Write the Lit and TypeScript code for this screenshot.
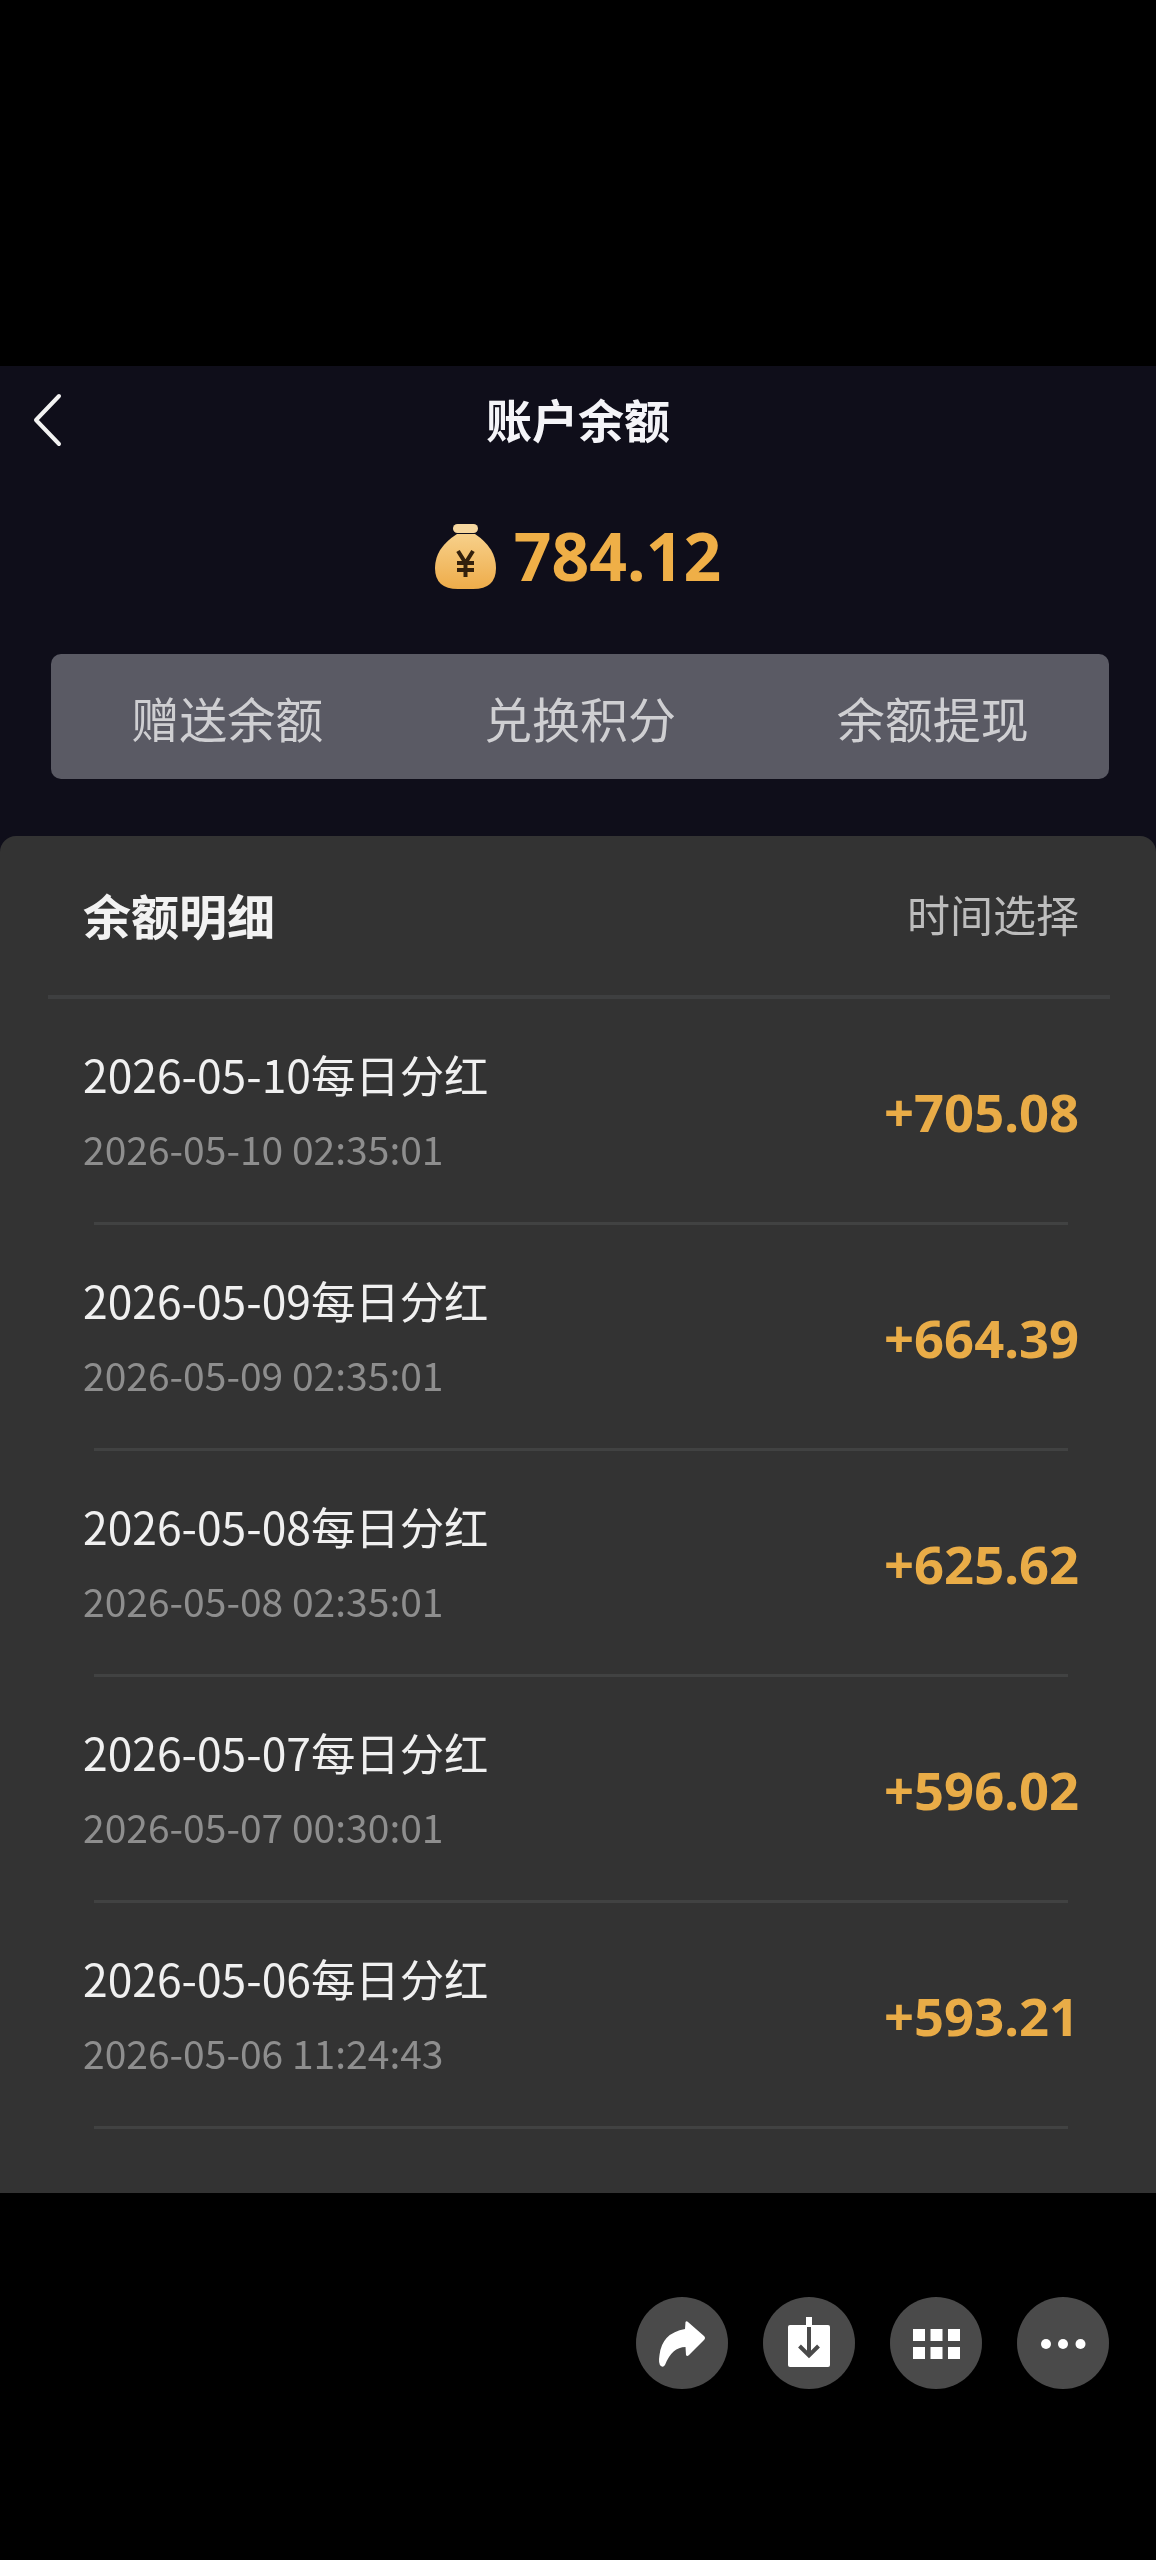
import {LitElement, html, css} from 'lit';
import {customElement} from 'lit/decorators.js';

const rows = [
  {title: '2026-05-10每日分红', time: '2026-05-10 02:35:01', amount: '+705.08'},
  {title: '2026-05-09每日分红', time: '2026-05-09 02:35:01', amount: '+664.39'},
  {title: '2026-05-08每日分红', time: '2026-05-08 02:35:01', amount: '+625.62'},
  {title: '2026-05-07每日分红', time: '2026-05-07 00:30:01', amount: '+596.02'},
  {title: '2026-05-06每日分红', time: '2026-05-06 11:24:43', amount: '+593.21'},
];

const tabs = ['赠送余额', '兑换积分', '余额提现'];

@customElement('app-root')
export class AppRoot extends LitElement {
  static override styles = css`
    * {
      box-sizing: border-box;
      margin: 0;
      padding: 0;
    }

    :host {
      display: block;
      width: 1156px;
      height: 2560px;
      background: #000;
      font-family: "Noto Sans CJK SC", "Noto Sans", sans-serif;
      overflow: hidden;
    }

    .screen {
      margin-top: 366px;
      height: 1827px;
      background: #0f0e1a;
      display: flex;
      flex-direction: column;
      filter: blur(0.6px);
    }

    .nav {
      height: 110px;
      padding-bottom: 6px;
      display: flex;
      align-items: center;
      justify-content: center;
      position: relative;
      color: #f4f4f8;
      font-size: 46px;
      font-weight: 700;
      line-height: 1;
    }

    .back {
      position: absolute;
      left: 30px;
      top: 26px;
      width: 34px;
      height: 56px;
    }

    .balance {
      height: 178px;
      display: flex;
      align-items: center;
      justify-content: center;
      gap: 18px;
      padding-bottom: 20px;
      color: #efaf47;
      font-family: "Noto Sans", sans-serif;
      font-size: 66px;
      font-weight: 700;
      line-height: 1;
    }

    .bag {
      width: 61px;
      height: 66px;
      margin-top: 4px;
      flex: none;
    }

    .tabs {
      margin: 0 47px 0 51px;
      height: 125px;
      border-radius: 10px;
      background: #5a5a64;
      display: grid;
      grid-template-columns: repeat(3, 1fr);
      align-items: center;
      text-align: center;
      color: #cfcfd2;
      font-size: 48px;
      line-height: 1;
    }

    .panel {
      margin-top: 57px;
      flex: 1;
      background: #333333;
      border-radius: 16px 16px 0 0;
      display: flex;
      flex-direction: column;
    }

    .panel-head {
      height: 163px;
      margin: 0 46px 0 48px;
      padding: 0 31px 4px 35px;
      border-bottom: 4px solid #3e3f40;
      display: flex;
      align-items: center;
      justify-content: space-between;
    }

    .panel-title {
      color: #f2f2f2;
      font-size: 48px;
      font-weight: 700;
      line-height: 1;
    }

    .picker {
      color: #bdbdbd;
      font-size: 43px;
      line-height: 1;
    }

    .row {
      height: 226px;
      margin: 0 88px 0 94px;
      border-bottom: 3px solid #414242;
      display: flex;
      align-items: center;
      justify-content: space-between;
    }

    .row-text {
      margin: -3px 0 0 -11px;
      display: flex;
      flex-direction: column;
      gap: 31px;
    }

    .row-title {
      color: #f0f0f0;
      font-size: 44.4px;
      line-height: 46px;
    }

    .row-time {
      color: #8e8e8e;
      font-size: 39px;
      line-height: 40px;
    }

    .row-amount {
      margin: 3px -11px 0 0;
      color: #e9ac47;
      font-family: "Noto Sans", sans-serif;
      font-size: 52.5px;
      font-weight: 700;
      line-height: 1;
    }

    .actions {
      margin: 104px 47px 0 0;
      display: flex;
      justify-content: flex-end;
      gap: 35px;
    }

    .action {
      width: 92px;
      height: 92px;
      border-radius: 50%;
      background: #4a4a4a;
    }

    .action svg {
      display: block;
      width: 92px;
      height: 92px;
    }
  `;

  override render() {
    return html`
      <div class="screen">
        <div class="nav">
          <svg class="back" viewBox="0 0 34 56" fill="none" stroke="#f2f2f2" stroke-width="4" stroke-linecap="round" stroke-linejoin="round">
            <path d="M29 4L6 28L29 52" />
          </svg>
          账户余额
        </div>
        <div class="balance">
          <svg class="bag" viewBox="0 0 61 66">
            <defs>
              <linearGradient id="bag-fill" x1="0" y1="0" x2="0" y2="1">
                <stop offset="0" stop-color="#f7d08a" />
                <stop offset="1" stop-color="#eeac4a" />
              </linearGradient>
            </defs>
            <rect x="18" y="0" width="25" height="9" rx="4.5" fill="#f6d79f" />
            <path fill="url(#bag-fill)" d="M22 10H40Q61 24 61 44Q61 65 38 65H23Q0 65 0 44Q0 24 22 10Z" />
            <path fill="none" stroke="#33200c" stroke-width="4" d="M23 27L30.5 39L38 27M30.5 39V53M22 39H39M22 46H39" />
          </svg>
          <span>784.12</span>
        </div>
        <div class="tabs">
          ${tabs.map((tab) => html`<div>${tab}</div>`)}
        </div>
        <div class="panel">
          <div class="panel-head">
            <div class="panel-title">余额明细</div>
            <div class="picker">时间选择</div>
          </div>
          ${rows.map(
            (row) => html`
              <div class="row">
                <div class="row-text">
                  <div class="row-title">${row.title}</div>
                  <div class="row-time">${row.time}</div>
                </div>
                <div class="row-amount">${row.amount}</div>
              </div>
            `
          )}
        </div>
      </div>
      <div class="actions">
        <div class="action">
          <svg viewBox="0 0 92 92">
            <path fill="#fff" d="M49.5 25Q50.5 23.5 52 25L68 39Q70 41 68 43L53 58Q51 60 50 58L49.5 50Q36 50 29 68Q27 71 25 69Q22 67 23.5 58Q26 36 49 32Z" />
          </svg>
        </div>
        <div class="action">
          <svg viewBox="0 0 92 92">
            <rect x="25" y="28" width="42" height="42" rx="2" fill="#fff" />
            <rect x="43" y="20" width="6" height="10" fill="#fff" />
            <path fill="none" stroke="#4a4a4a" stroke-width="4" d="M46 30V58M36.5 49L46 58.5L55.5 49" />
          </svg>
        </div>
        <div class="action">
          <svg viewBox="0 0 92 92" fill="#fff">
            <rect x="23" y="32" width="12" height="12" />
            <rect x="40.5" y="32" width="12" height="12" />
            <rect x="58" y="32" width="12" height="12" />
            <rect x="23" y="50" width="12" height="12" />
            <rect x="40.5" y="50" width="12" height="12" />
            <rect x="58" y="50" width="12" height="12" />
          </svg>
        </div>
        <div class="action">
          <svg viewBox="0 0 92 92" fill="#fff">
            <circle cx="29" cy="47" r="5" />
            <circle cx="46" cy="47" r="5" />
            <circle cx="63.5" cy="47" r="5" />
          </svg>
        </div>
      </div>
    `;
  }
}

declare global {
  interface HTMLElementTagNameMap {
    'app-root': AppRoot;
  }
}
